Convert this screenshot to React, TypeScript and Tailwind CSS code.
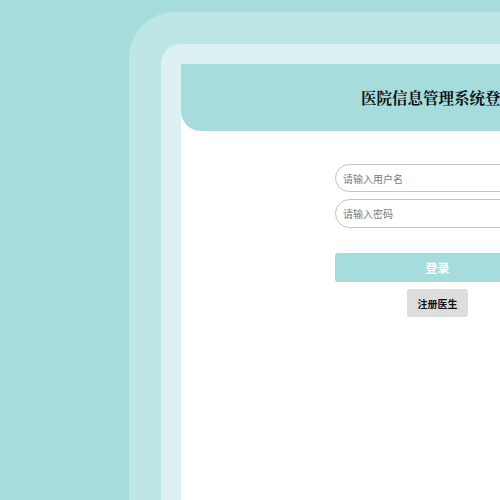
export default function App() {
  return (
    <div className="w-[500px] h-[500px] overflow-hidden bg-[#a6dcdc] pl-[129px] pt-[12px] font-['Noto_Sans_CJK_SC',sans-serif]">
      <div className="w-[720px] h-[620px] rounded-tl-[46px] bg-[#bfe6e6] p-[32px]">
        <div className="h-full rounded-tl-[20px] bg-[#ddf1f3] p-[20px]">
          <div className="h-full bg-white">
            <header className="h-[67px] bg-[#a6dcdc] rounded-bl-[20px] flex items-center pl-[180px]">
              <h1 className="text-[15.5px] font-bold text-[#111] font-['Noto_Serif_CJK_SC','Noto_Sans_CJK_SC',serif] whitespace-nowrap">
                医院信息管理系统登录
              </h1>
            </header>

            <form className="ml-[154px] mt-[33px] w-[205px] flex flex-col">
              <input
                type="text"
                placeholder="请输入用户名"
                className="h-[28px] w-full rounded-full border border-[#c4c4c4] px-[7px] text-[10px] placeholder:text-[#7a7a7a] outline-none"
              />
              <input
                type="password"
                placeholder="请输入密码"
                className="mt-[7px] h-[29px] w-full rounded-full border border-[#c4c4c4] px-[7px] text-[10px] placeholder:text-[#7a7a7a] outline-none"
              />
              <button
                type="button"
                className="mt-[25px] h-[29px] w-full rounded-[3px] bg-[#a6dcdc] text-[12px] font-bold text-white"
              >
                登录
              </button>
              <div className="flex justify-center mt-[7px]">
                <button
                  type="button"
                  className="h-[28px] w-[61px] rounded-[3px] bg-[#dddddd] text-[10px] font-bold text-[#111]"
                >
                  注册医生
                </button>
              </div>
            </form>
          </div>
        </div>
      </div>
    </div>
  );
}
